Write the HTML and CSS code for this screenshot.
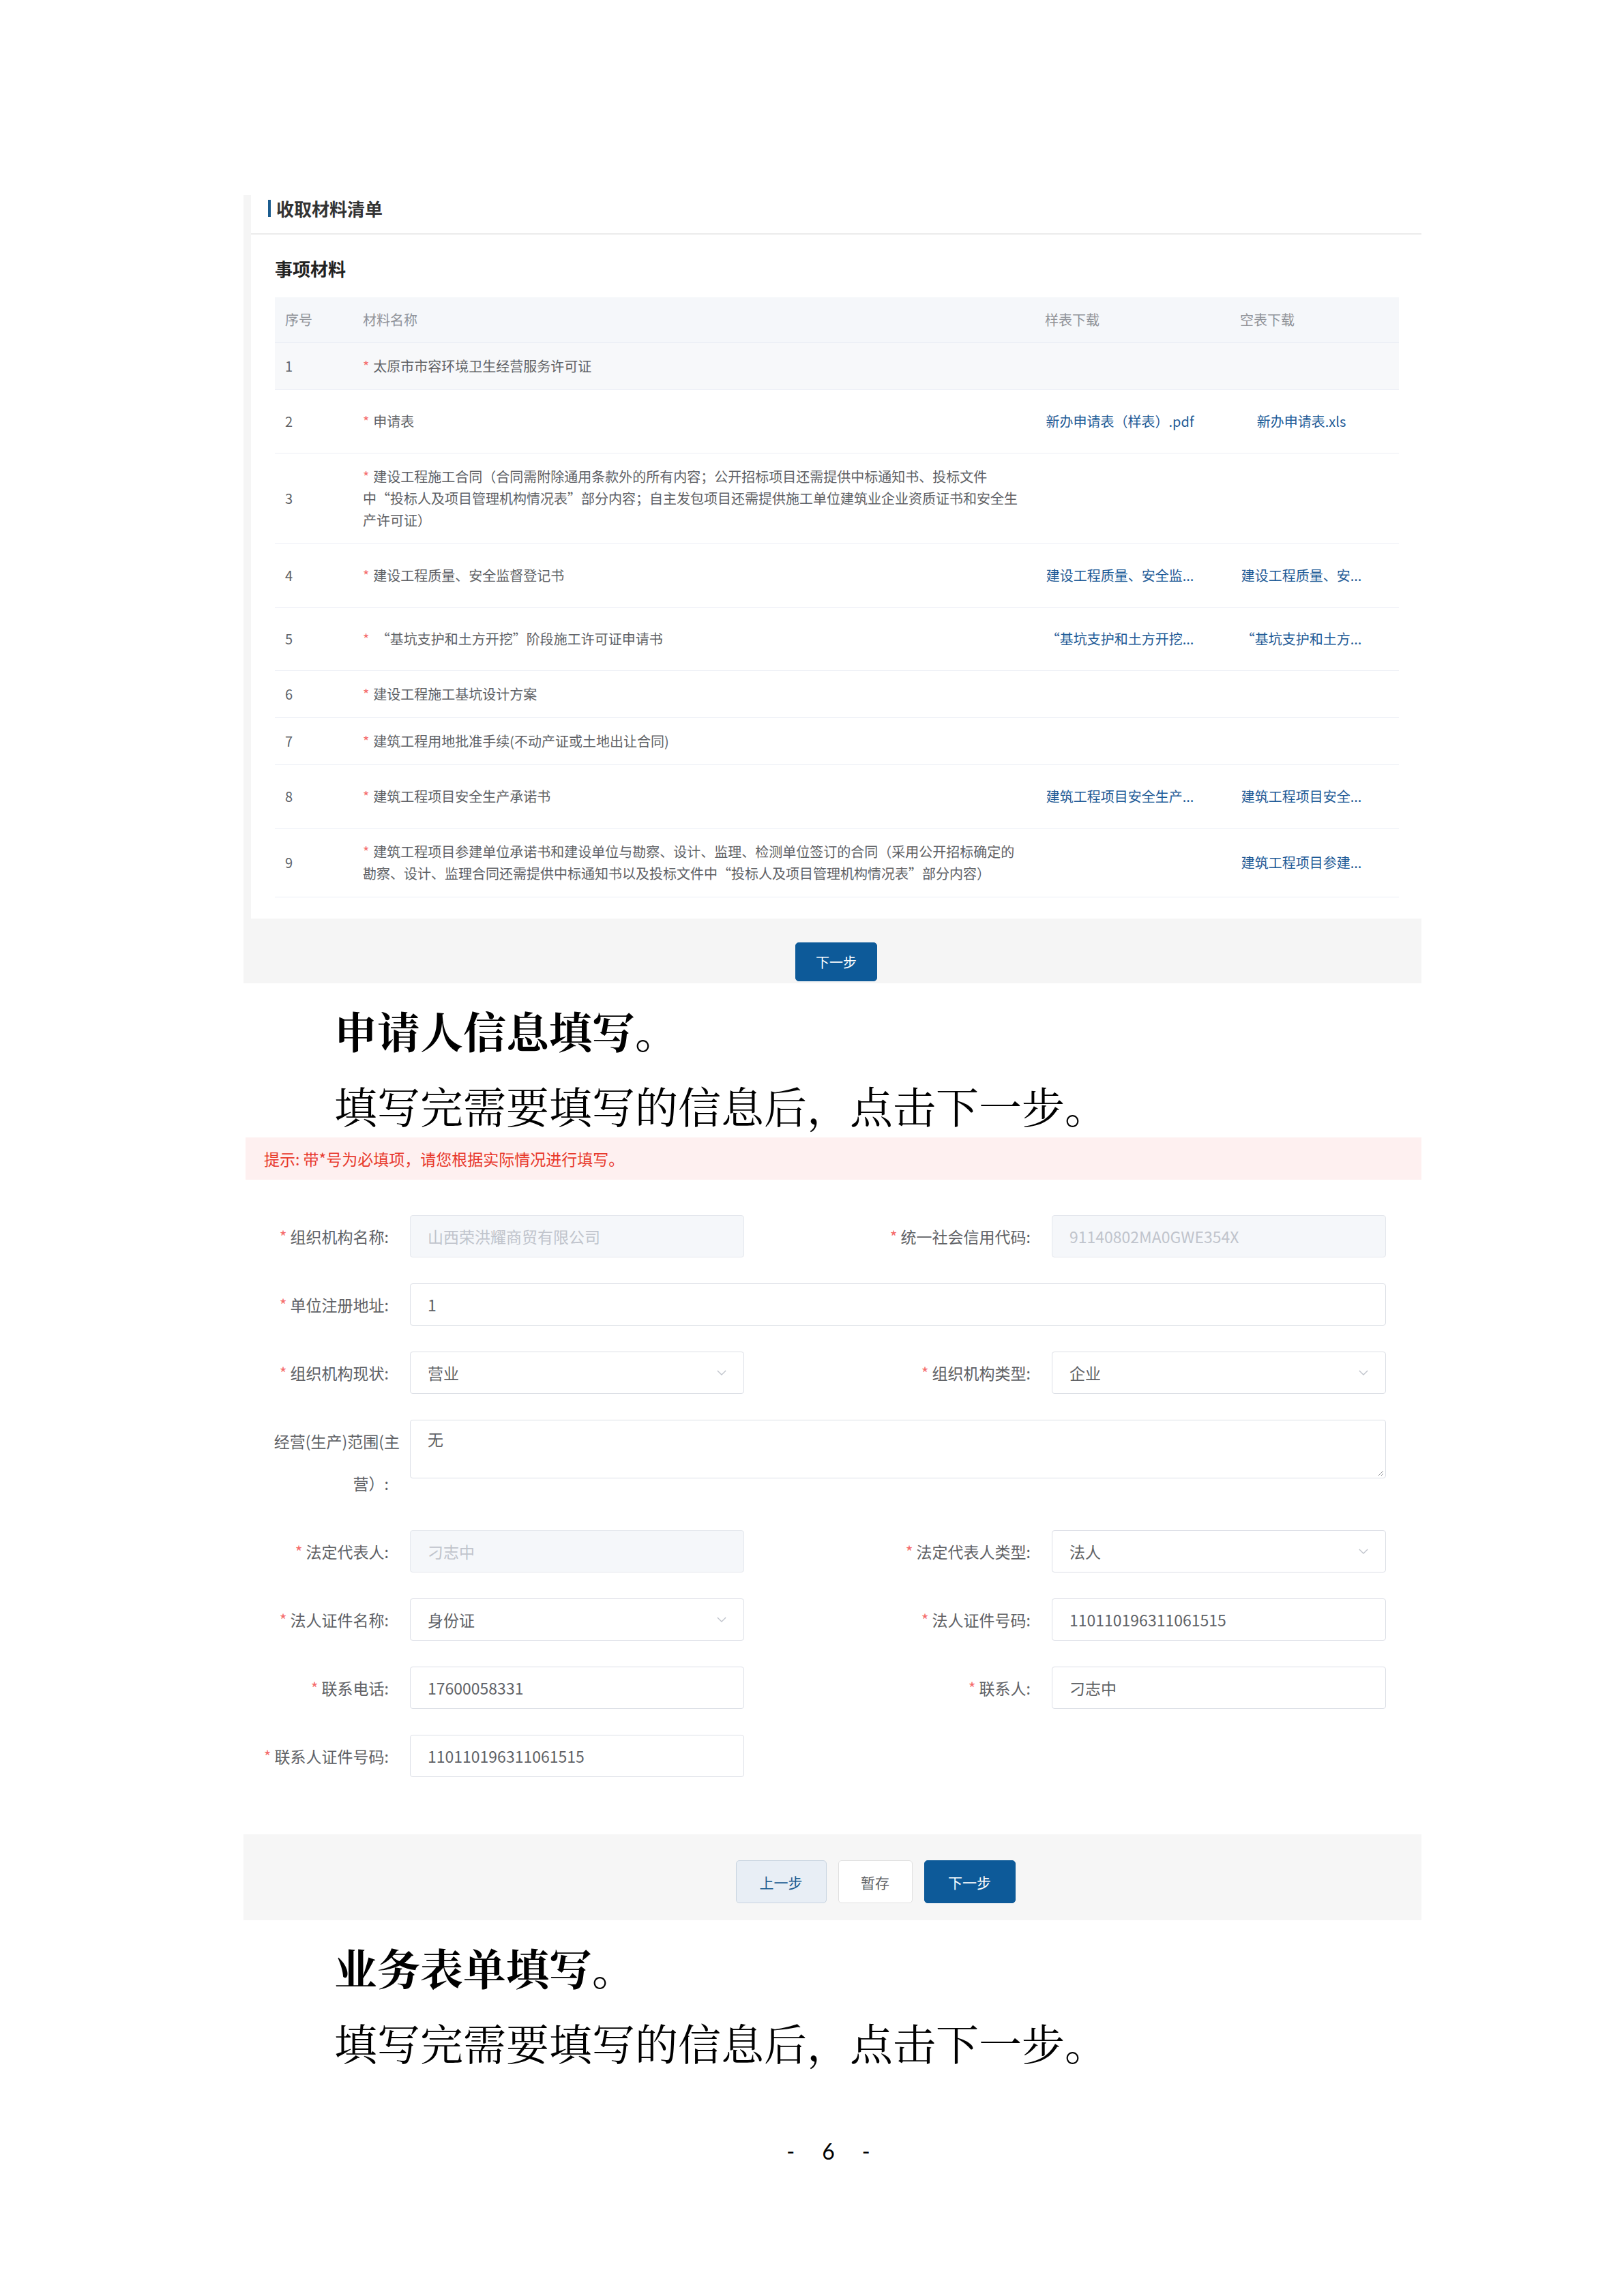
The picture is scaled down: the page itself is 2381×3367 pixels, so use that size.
FILE: index.html
```html
<!DOCTYPE html>
<html lang="zh-CN">
<head>
<meta charset="utf-8">
<title>收取材料清单</title>
<link rel="stylesheet" href="styles.css">
</head>
<body>
<div class="page">
  <section class="shot">
    <div class="panel">
      <div class="panel-title"><span class="bar"></span><span>收取材料清单</span></div>
      <div class="panel-body">
        <h3 class="sub-title">事项材料</h3>
        <table class="mat-table">
          <colgroup><col class="c-no"><col class="c-name"><col class="c-sample"><col class="c-blank"></colgroup>
          <thead>
            <tr><th>序号</th><th>材料名称</th><th>样表下载</th><th>空表下载</th></tr>
          </thead>
          <tbody>
            <tr class="hl"><td>1</td><td><span class="req">*</span>太原市市容环境卫生经营服务许可证</td><td></td><td></td></tr>
            <tr><td>2</td><td><span class="req">*</span>申请表</td><td><a class="dl dl-s">新办申请表（样表）.pdf</a></td><td><a class="dl dl-b">新办申请表.xls</a></td></tr>
            <tr><td>3</td><td><span class="req">*</span>建设工程施工合同（合同需附除通用条款外的所有内容；公开招标项目还需提供中标通知书、投标文件<br>中“投标人及项目管理机构情况表”部分内容；自主发包项目还需提供施工单位建筑业企业资质证书和安全生<br>产许可证）</td><td></td><td></td></tr>
            <tr><td>4</td><td><span class="req">*</span>建设工程质量、安全监督登记书</td><td><a class="dl dl-s">建设工程质量、安全监...</a></td><td><a class="dl dl-b">建设工程质量、安...</a></td></tr>
            <tr><td>5</td><td><span class="req">*</span> “基坑支护和土方开挖”阶段施工许可证申请书</td><td><a class="dl dl-s">“基坑支护和土方开挖...</a></td><td><a class="dl dl-b">“基坑支护和土方...</a></td></tr>
            <tr><td>6</td><td><span class="req">*</span>建设工程施工基坑设计方案</td><td></td><td></td></tr>
            <tr><td>7</td><td><span class="req">*</span>建筑工程用地批准手续(不动产证或土地出让合同)</td><td></td><td></td></tr>
            <tr><td>8</td><td><span class="req">*</span>建筑工程项目安全生产承诺书</td><td><a class="dl dl-s">建筑工程项目安全生产...</a></td><td><a class="dl dl-b">建筑工程项目安全...</a></td></tr>
            <tr><td>9</td><td><span class="req">*</span>建筑工程项目参建单位承诺书和建设单位与勘察、设计、监理、检测单位签订的合同（采用公开招标确定的<br>勘察、设计、监理合同还需提供中标通知书以及投标文件中“投标人及项目管理机构情况表”部分内容）</td><td></td><td><a class="dl dl-b">建筑工程项目参建...</a></td></tr>
          </tbody>
        </table>
      </div>
    </div>
    <div class="shot-foot">
      <button class="btn btn-primary btn-next1">下一步</button>
    </div>
  </section>

  <h2 class="doc-h">申请人信息填写。</h2>
  <p class="doc-p">填写完需要填写的信息后，点击下一步。</p>

  <div class="tip">提示: 带*号为必填项，请您根据实际情况进行填写。</div>

  <div class="form">
    <div class="row">
      <label class="lbl"><span class="req">*</span>组织机构名称:</label>
      <div class="ctl disabled">山西荣洪耀商贸有限公司</div>
      <div></div>
      <label class="lbl"><span class="req">*</span>统一社会信用代码:</label>
      <div class="ctl disabled">91140802MA0GWE354X</div>
    </div>
    <div class="row">
      <label class="lbl"><span class="req">*</span>单位注册地址:</label>
      <div class="ctl wide">1</div>
    </div>
    <div class="row">
      <label class="lbl"><span class="req">*</span>组织机构现状:</label>
      <div class="ctl select"><span>营业</span><svg class="chev" viewBox="0 0 16 9"><polyline points="1,1 8,8 15,1"/></svg></div>
      <div></div>
      <label class="lbl"><span class="req">*</span>组织机构类型:</label>
      <div class="ctl select"><span>企业</span><svg class="chev" viewBox="0 0 16 9"><polyline points="1,1 8,8 15,1"/></svg></div>
    </div>
    <div class="row">
      <label class="lbl"><span class="wrap-l1">经营(生产)范围(主</span><br>营）:</label>
      <div class="ctl wide area">无<svg class="grip" viewBox="0 0 10 10"><line x1="9" y1="2" x2="2" y2="9"/><line x1="9" y1="6" x2="6" y2="9"/></svg></div>
    </div>
    <div class="row">
      <label class="lbl"><span class="req">*</span>法定代表人:</label>
      <div class="ctl disabled">刁志中</div>
      <div></div>
      <label class="lbl"><span class="req">*</span>法定代表人类型:</label>
      <div class="ctl select"><span>法人</span><svg class="chev" viewBox="0 0 16 9"><polyline points="1,1 8,8 15,1"/></svg></div>
    </div>
    <div class="row">
      <label class="lbl"><span class="req">*</span>法人证件名称:</label>
      <div class="ctl select"><span>身份证</span><svg class="chev" viewBox="0 0 16 9"><polyline points="1,1 8,8 15,1"/></svg></div>
      <div></div>
      <label class="lbl"><span class="req">*</span>法人证件号码:</label>
      <div class="ctl">110110196311061515</div>
    </div>
    <div class="row">
      <label class="lbl"><span class="req">*</span>联系电话:</label>
      <div class="ctl">17600058331</div>
      <div></div>
      <label class="lbl"><span class="req">*</span>联系人:</label>
      <div class="ctl">刁志中</div>
    </div>
    <div class="row">
      <label class="lbl"><span class="req">*</span>联系人证件号码:</label>
      <div class="ctl">110110196311061515</div>
    </div>
  </div>

  <div class="form-foot">
    <button class="btn btn-prev">上一步</button>
    <button class="btn btn-save">暂存</button>
    <button class="btn btn-primary btn-next2">下一步</button>
  </div>

  <h2 class="doc-h">业务表单填写。</h2>
  <p class="doc-p">填写完需要填写的信息后，点击下一步。</p>

  <div class="page-num"><span>-</span><span>6</span><span>-</span></div>
</div>
</body>
</html>
```

FILE: styles.css
```css
* { box-sizing: border-box; }
html, body { margin: 0; padding: 0; background: #fff; }
body {
  font-family: "Noto Sans CJK SC", "Microsoft YaHei", sans-serif;
  color: #606266;
}
.page {
  width: 2381px;
  min-height: 3367px;
  padding-top: 286px;
}

/* ---------- screenshot 1 : materials ---------- */
.shot {
  margin-left: 357px;
  width: 1727px;
  background: #f5f5f5;
}
.panel {
  margin-left: 11px;
  background: #fff;
  padding-bottom: 31px;
}
.panel-title {
  height: 58px;
  padding: 0 0 18px 25px;
  display: flex;
  align-items: center;
  font-size: 26px;
  font-weight: 700;
  color: #333;
  border-bottom: 2px solid #ebebeb;
}
.panel-title .bar {
  width: 4px;
  height: 25px;
  background: #1b5c8f;
  margin-right: 8px;
}
.panel-body {
  padding: 0 33px 0 35px;
}
.sub-title {
  margin: 32px 0 24px;
  font-size: 26px;
  line-height: 36px;
  font-weight: 700;
  color: #222;
}
.mat-table {
  width: 100%;
  border-collapse: collapse;
  table-layout: fixed;
  font-size: 20px;
}
.c-no { width: 114px; }
.c-name { width: 1000px; }
.c-sample { width: 286px; }
.c-blank { width: 248px; }
.mat-table th {
  background: #f5f7fa;
  font-weight: 400;
  color: #909399;
  text-align: left;
  padding: 17px 0 17px 15px;
  line-height: 32px;
  border-bottom: 1px solid #ebeef5;
}
.mat-table td {
  padding: 18px 0 18px 15px;
  line-height: 32px;
  border-bottom: 1px solid #ebeef5;
  vertical-align: middle;
  color: #606266;
}
.mat-table tr.hl td { background: #f7f8fa; }
.req { color: #f56c6c; margin-right: 6px; }
.dl {
  display: block;
  line-height: 56px;
  text-align: center;
  white-space: nowrap;
  overflow: hidden;
  color: #1e5a96;
  text-decoration: none;
  cursor: pointer;
}
.dl-s { width: 220px; }
.dl-b { width: 180px; }

.shot-foot {
  height: 95px;
  padding: 0 0 3px 11px;
  display: flex;
  justify-content: center;
  align-items: flex-end;
}

/* ---------- buttons ---------- */
.btn {
  font-family: "Noto Sans CJK SC", "Microsoft YaHei", sans-serif;
  font-size: 21px;
  border-radius: 5px;
  border: 1px solid #e0e0e0;
  background: #fff;
  color: #606266;
  padding: 0;
  cursor: pointer;
}
.btn-primary {
  background: #0d5a99;
  border-color: #0d5a99;
  color: #fff;
}
.btn-next1 { width: 120px; height: 57px; font-size: 20px; }

/* ---------- document text ---------- */
.doc-h {
  margin: 12px 0 0 490px;
  font-family: "Noto Serif CJK SC", "Noto Sans CJK SC", serif;
  font-size: 63px;
  line-height: 112px;
  font-weight: 700;
  color: #000;
}
.doc-p {
  margin: 0 0 0 490px;
  padding-top: 6px;
  font-family: "Noto Serif CJK SC", "Noto Sans CJK SC", serif;
  font-size: 63px;
  line-height: 96px;
  font-weight: 400;
  color: #000;
}

/* ---------- screenshot 2 : applicant form ---------- */
.tip {
  margin-left: 360px;
  width: 1724px;
  height: 62px;
  background: #fef0f0;
  color: #e8392c;
  font-size: 23px;
  line-height: 62px;
  padding-left: 27px;
}
.form {
  margin: 52px 0 0 371px;
  width: 1661px;
}
.row {
  display: grid;
  grid-template-columns: 230px 490px 199px 252px 490px;
  align-items: start;
  margin-bottom: 38px;
}
.lbl {
  text-align: right;
  padding-right: 31px;
  line-height: 62px;
  font-size: 23px;
  color: #606266;
  white-space: nowrap;
}
.lbl .req { margin-right: 5px; }
.wrap-l1 { margin-right: -16px; }
.ctl {
  height: 62px;
  border: 1px solid #dcdfe6;
  border-radius: 4px;
  padding: 0 25px;
  display: flex;
  align-items: center;
  font-size: 23px;
  color: #606266;
  background: #fff;
}
.ctl.disabled {
  background: #f5f7fa;
  border-color: #e4e7ed;
  color: #c0c4cc;
}
.ctl.wide { grid-column: 2 / 6; }
.ctl.select { justify-content: space-between; }
.chev {
  width: 14px;
  height: 8px;
  fill: none;
  stroke: #c0c4cc;
  stroke-width: 1.5;
}
.ctl.area {
  height: 86px;
  align-items: flex-start;
  padding-top: 12px;
  line-height: 30px;
  position: relative;
}
.grip {
  position: absolute;
  right: 2px;
  bottom: 2px;
  width: 10px;
  height: 10px;
  stroke: #909399;
  stroke-width: 1;
}

.form-foot {
  margin: 84px 0 0 357px;
  width: 1727px;
  height: 126px;
  background: #f6f6f6;
  display: flex;
  justify-content: center;
  align-items: flex-start;
  gap: 17px;
  padding: 38px 0 0 126px;
}
.form-foot .btn { height: 63px; }
.btn-prev {
  width: 133px;
  background: #e8eef5;
  border-color: #c8d4e0;
  color: #1b5c8f;
}
.btn-save { width: 109px; }
.btn-next2 { width: 134px; }

.page-num {
  margin-top: 93px;
  display: flex;
  justify-content: center;
  gap: 40px;
  padding-left: 48px;
  font-family: "Lato", "Open Sans", sans-serif;
  font-size: 32px;
  line-height: 40px;
  color: #000;
}
```
